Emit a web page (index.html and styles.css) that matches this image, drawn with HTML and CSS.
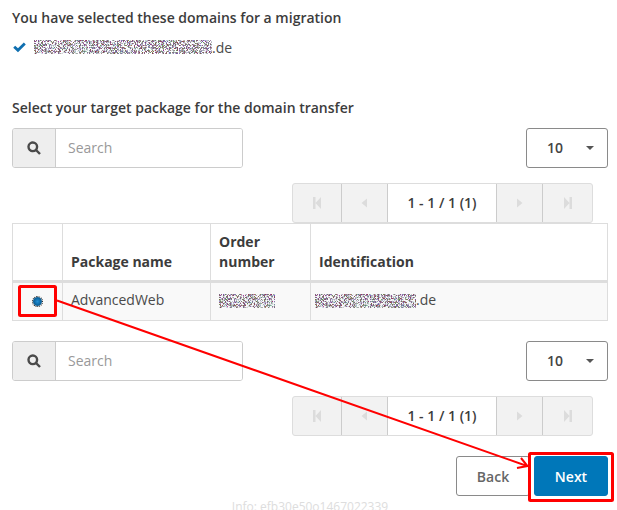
FILE: index.html
```html
<!DOCTYPE html>
<html lang="en">
<head>
    <meta charset="UTF-8">
    <meta name="viewport" content="width=device-width, initial-scale=1.0">
    <title>Domain migration</title>
    <link rel="stylesheet" href="styles.css">
</head>
<body>
    <svg class="defs" width="0" height="0">
        <filter id="noise" x="0" y="0" width="100%" height="100%" color-interpolation-filters="sRGB">
            <feTurbulence type="turbulence" baseFrequency="0.71" numOctaves="2" seed="11"/>
            <feColorMatrix type="matrix" values="0.8 0 0 0 0.14  0 0.7 0 0 0.18  0 0 0.9 0 0.22  3.6 1.2 0 0 -0.8"/>
        </filter>
    </svg>

    <h2 class="heading">You have selected these domains for a migration</h2>
    <div class="selected">
        <svg class="check" viewBox="0 0 12 10"><path d="M0.2 5.2 L2 3.3 L4.6 5.7 L10 0.4 L11.8 2.3 L4.6 9.4 Z"/></svg>
        <svg class="mask" width="178" height="14"><rect width="178" height="14" filter="url(#noise)"/></svg><span>.de</span>
    </div>

    <h2 class="heading heading-target">Select your target package for the domain transfer</h2>

    <div class="toolbar">
        <div class="search">
            <span class="search-addon">
                <svg class="search-icon" viewBox="0 0 14 14"><circle cx="5.8" cy="5.8" r="4.3"/><path d="M9 9 L13 13"/></svg>
            </span>
            <input class="search-input" type="text" placeholder="Search">
        </div>
        <div class="size-select"><span>10</span><i class="caret"></i></div>
    </div>

    <div class="pager">
        <span class="pager-btn pager-wide"><svg viewBox="0 0 10 14"><path d="M1 1 H3.5 V13 H1 Z M9 1 V13 L3.5 7 Z"/></svg></span>
        <span class="pager-btn"><svg viewBox="0 0 10 14"><path d="M8 2.5 V11.5 L2.5 7 Z"/></svg></span>
        <span class="pager-info">1 - 1 / 1 (1)</span>
        <span class="pager-btn"><svg viewBox="0 0 10 14"><path d="M2 2.5 V11.5 L7.5 7 Z"/></svg></span>
        <span class="pager-btn pager-wide"><svg viewBox="0 0 10 14"><path d="M9 1 H6.5 V13 H9 Z M1 1 V13 L6.5 7 Z"/></svg></span>
    </div>

    <table class="packages">
        <thead>
            <tr>
                <th class="col-radio"></th>
                <th class="col-name">Package name</th>
                <th class="col-order">Order number</th>
                <th>Identification</th>
            </tr>
        </thead>
        <tbody>
            <tr>
                <td class="cell-radio"><span class="radio"></span></td>
                <td>AdvancedWeb</td>
                <td><svg class="mask" width="56" height="14"><rect width="56" height="14" filter="url(#noise)"/></svg></td>
                <td class="cell-id"><svg class="mask" width="101" height="14"><rect width="101" height="14" filter="url(#noise)"/></svg><span>.de</span></td>
            </tr>
        </tbody>
    </table>

    <div class="toolbar toolbar-bottom">
        <div class="search">
            <span class="search-addon">
                <svg class="search-icon" viewBox="0 0 14 14"><circle cx="5.8" cy="5.8" r="4.3"/><path d="M9 9 L13 13"/></svg>
            </span>
            <input class="search-input" type="text" placeholder="Search">
        </div>
        <div class="size-select"><span>10</span><i class="caret"></i></div>
    </div>

    <div class="pager">
        <span class="pager-btn pager-wide"><svg viewBox="0 0 10 14"><path d="M1 1 H3.5 V13 H1 Z M9 1 V13 L3.5 7 Z"/></svg></span>
        <span class="pager-btn"><svg viewBox="0 0 10 14"><path d="M8 2.5 V11.5 L2.5 7 Z"/></svg></span>
        <span class="pager-info">1 - 1 / 1 (1)</span>
        <span class="pager-btn"><svg viewBox="0 0 10 14"><path d="M2 2.5 V11.5 L7.5 7 Z"/></svg></span>
        <span class="pager-btn pager-wide"><svg viewBox="0 0 10 14"><path d="M9 1 H6.5 V13 H9 Z M1 1 V13 L6.5 7 Z"/></svg></span>
    </div>

    <div class="actions">
        <button class="btn btn-back">Back</button>
        <button class="btn btn-next">Next</button>
    </div>

    <div class="info">Info: efb30e50o1467022339</div>

    <!-- red annotation on top of the screenshot -->
    <svg class="annotation" width="617" height="510" viewBox="0 0 617 510">
        <rect x="19.5" y="286.5" width="36" height="29" rx="1"/>
        <rect x="529.5" y="453.5" width="83" height="47" rx="1"/>
        <path class="arrow" d="M57 300.5 L527 466 M521 458 L527.5 466 L517 468"/>
    </svg>
</body>
</html>
```

FILE: styles.css
```css
*{
    margin:0;
    padding:0;
    box-sizing: border-box;
}
html, body{
    height: 510px;
    overflow: hidden;
}
body{
    position: relative;
    background-color: #fff;
    padding: 0 9px 0 12px;
    font-family: "Open Sans", sans-serif;
    font-size: 14px;
    color: #3c3c3c;
}
.defs{
    position: absolute;
}
.heading{
    font-size: 14px;
    font-weight: 600;
    line-height: 20px;
    padding-top: 8px;
    color: #3c3c3c;
}
.heading-target{
    padding-top: 0;
    margin-top: 40px;
}
.selected{
    display: flex;
    align-items: center;
    height: 20px;
    margin-top: 10px;
    padding-bottom: 2px;
    color: #4a4a4a;
}
.check{
    width: 13px;
    height: 11px;
    margin: 1px 8px 0 1px;
    fill: #0f6fb0;
}
.mask{
    display: inline-block;
    vertical-align: middle;
}
.toolbar{
    display: flex;
    justify-content: space-between;
    margin-top: 10px;
}
.toolbar-bottom{
    margin-top: 20px;
}
.search{
    display: flex;
    width: 231px;
    height: 40px;
    border: 1px solid #ccc;
    border-radius: 3px;
    overflow: hidden;
}
.search-addon{
    width: 43px;
    display: flex;
    align-items: center;
    justify-content: center;
    background-color: #eee;
    border-right: 1px solid #ccc;
}
.search-icon{
    width: 14px;
    height: 14px;
    fill: none;
    stroke: #4a4a4a;
    stroke-width: 2.4;
}
.search-input{
    flex: 1;
    min-width: 0;
    border: 0;
    outline: 0;
    padding: 0 0 2px 12px;
    font-family: inherit;
    font-size: 14px;
}
.search-input::placeholder{
    color: #999;
    opacity: 1;
}
.size-select{
    width: 82px;
    height: 40px;
    border: 1px solid #8a8a8a;
    border-radius: 3px;
    display: flex;
    align-items: center;
    padding: 0 0 2px 20px;
    font-weight: 600;
    color: #444;
}
.caret{
    margin: 2px 0 0 23px;
    border-top: 4px solid #555;
    border-left: 4px solid transparent;
    border-right: 4px solid transparent;
}
.pager{
    display: flex;
    width: 301px;
    height: 40px;
    margin: 15px 0 0 280px;
    border: 1px solid #ddd;
    border-radius: 3px;
    background-color: #f2f2f2;
}
.pager-btn{
    width: 46px;
    display: flex;
    align-items: center;
    justify-content: center;
    border-right: 1px solid #ccc;
}
.pager-btn:last-child{
    border-right: 0;
}
.pager-wide{
    width: 49px;
}
.pager-btn svg{
    width: 10px;
    height: 14px;
    fill: #dcdcdc;
}
.pager-info{
    width: 110px;
    display: flex;
    align-items: center;
    justify-content: center;
    padding: 0 0 2px;
    background-color: #fff;
    border-right: 1px solid #ccc;
    font-weight: 600;
    color: #3c3c3c;
}
.packages{
    width: 596px;
    table-layout: fixed;
    border-collapse: collapse;
}
.packages th, .packages td{
    border: 1px solid #ddd;
    padding: 6px 8px 10px;
    text-align: left;
}
.packages th{
    vertical-align: bottom;
    padding: 8px;
    font-weight: 700;
    line-height: 20px;
    border-bottom: 3px solid #ddd;
    height: 58px;
}
.packages td{
    background-color: #f9f9f9;
    height: 39px;
    color: #4a4a4a;
}
.packages .cell-id{
    padding-left: 4px;
}
.col-radio{
    width: 50px;
}
.col-name{
    width: 148px;
}
.col-order{
    width: 100px;
}
.packages .cell-radio{
    text-align: center;
    padding: 0 1px 3px 0;
}
.radio{
    display: inline-block;
    width: 9px;
    height: 9px;
    vertical-align: middle;
    border-radius: 50%;
    background: radial-gradient(circle at 50% 50%, #1f8fd6 0, #0a5f98 60%, #6d8394 100%);
    outline: 1px dotted #111;
    outline-offset: 0;
}
.actions{
    display: flex;
    justify-content: flex-end;
    gap: 4px;
    margin-top: 20px;
}
.btn{
    width: 74px;
    height: 40px;
    border-radius: 3px;
    font-family: inherit;
    font-size: 14px;
    font-weight: 600;
}
.btn-back{
    background-color: #fff;
    border: 1px solid #8a8a8a;
    color: #666;
}
.btn-next{
    background-color: #0077b9;
    border: 1px solid #0077b9;
    color: #fff;
}
.info{
    margin-top: 2px;
    text-align: center;
    font-size: 12px;
    color: #ddd;
}
.annotation{
    position: absolute;
    left: 0;
    top: 0;
    fill: none;
    stroke: #f00;
    stroke-width: 3;
}
.annotation .arrow{
    stroke-width: 2;
}
```
